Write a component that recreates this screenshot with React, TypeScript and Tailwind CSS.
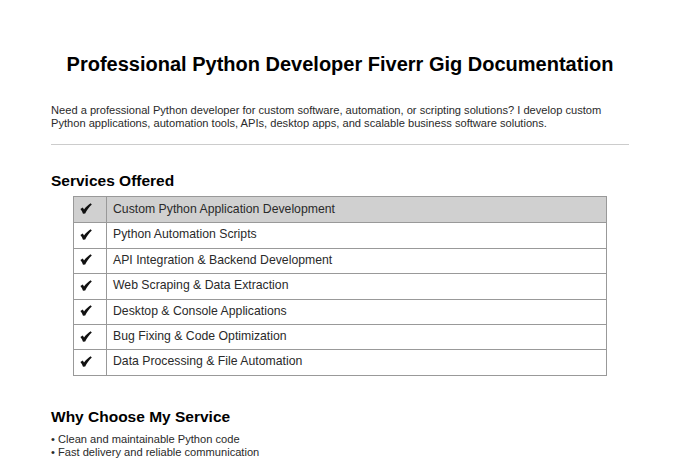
const services = [
  'Custom Python Application Development',
  'Python Automation Scripts',
  'API Integration & Backend Development',
  'Web Scraping & Data Extraction',
  'Desktop & Console Applications',
  'Bug Fixing & Code Optimization',
  'Data Processing & File Automation',
]

function Check() {
  return (
    <svg width="12" height="11" viewBox="0 0 12 11" className="text-[#111]">
      <path
        fill="currentColor"
        d="M0.4 6 L2.8 4.6 L4 6.4 C6 4 8.4 1.8 10.6 0.3 L11.8 1.6 C9 4.2 6.9 7.2 5.2 10.6 L3 10.8 C2.5 9 1.6 7.4 0.4 6 Z"
      />
    </svg>
  )
}

export default function App() {
  return (
    <div className="h-[459px] w-[680px] overflow-hidden bg-white px-[51px] pt-[51px] font-['Liberation_Sans',Arial,sans-serif] text-[#111]">
      <h1 className="text-center text-[20px] leading-[26px] font-bold text-black">
        Professional Python Developer Fiverr Gig Documentation
      </h1>

      <p className="mt-[27px] text-[11.12px] leading-[13px] text-[#2a2a2a]">
        Need a professional Python developer for custom software, automation, or scripting solutions? I develop custom
        <br />
        Python applications, automation tools, APIs, desktop apps, and scalable business software solutions.
      </p>

      <hr className="mt-[14px] w-[578px] border-t border-[#cccccc]" />

      <h2 className="mt-[26px] text-[15.5px] leading-[20px] font-bold text-black">Services Offered</h2>

      <div className="mt-[5px] ml-[22px] w-[534px] border border-[#999999]">
        {services.map((service, i) => (
          <div
            key={service}
            className={`flex h-[25.4px] items-center border-[#999999] ${i > 0 ? 'border-t' : ''} ${i === 0 ? 'bg-[#d0d0d0]' : ''}`}
          >
            <div className="flex h-full w-[33px] shrink-0 items-center border-r border-[#999999] pb-[2px] pl-[6px]">
              <Check />
            </div>
            <div className="pb-[2px] pl-[6px] text-[12.25px] text-[#2a2a2a]">{service}</div>
          </div>
        ))}
      </div>

      <h2 className="mt-[31px] text-[15.5px] leading-[20px] font-bold text-black">Why Choose My Service</h2>

      <ul className="mt-[6px] text-[11.12px] leading-[13px] text-[#2a2a2a]">
        <li>• Clean and maintainable Python code</li>
        <li>• Fast delivery and reliable communication</li>
      </ul>
    </div>
  )
}
